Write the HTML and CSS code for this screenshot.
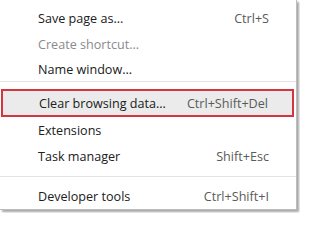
FILE: index.html
```html
<!DOCTYPE html>
<html>
<head>
<meta charset="utf-8">
<link rel="stylesheet" href="styles.css">
</head>
<body>
<div class="menu">
  <div class="item"><span class="label">Save page as...</span><span class="key">Ctrl+S</span></div>
  <div class="item disabled"><span class="label">Create shortcut...</span></div>
  <div class="item short"><span class="label">Name window...</span></div>
  <div class="sep"></div>
  <div class="item active"><span class="label">Clear browsing data...</span><span class="key">Ctrl+Shift+Del</span></div>
  <div class="item"><span class="label">Extensions</span></div>
  <div class="item"><span class="label">Task manager</span><span class="key">Shift+Esc</span></div>
  <div class="sep sep2"></div>
  <div class="item"><span class="label">Developer tools</span><span class="key">Ctrl+Shift+I</span></div>
</div>
</body>
</html>
```
FILE: styles.css
```css
html, body {
  margin: 0;
  padding: 0;
  background: #ffffff;
  width: 300px;
  height: 213px;
  overflow: hidden;
}
.menu {
  width: 297px;
  height: 210px;
  box-sizing: border-box;
  background: #fff;
  border-right: 1px solid #bdbdbd;
  border-bottom: 1px solid #bdbdbd;
  box-shadow: 2px 2px 2px rgba(0,0,0,0.35);
  padding-top: 5px;
  font-family: "Open Sans", "Noto Sans", sans-serif;
  font-size: 12.6px;
  color: #202020;
  display: flex;
  flex-direction: column;
}
.item {
  height: 26px;
  display: flex;
  align-items: center;
  justify-content: space-between;
  padding: 0 27px 0 38px;
  flex-shrink: 0;
}
.item.short { height: 24px; }
.item.disabled { color: #8a8a8a; }
.key { color: #5a5a5a; }
.item.active {
  height: 28px;
  box-sizing: border-box;
  margin: 0 2px 0 1px;
  padding: 0 24px 0 36px;
  border: 2px solid #d3363f;
  background: #ebebeb;
}
.sep {
  height: 1px;
  background: #e3e3e3;
  margin: 0 0 7px 0;
  flex-shrink: 0;
}
.sep2 { margin: 7px 0 6px 0; }
```
